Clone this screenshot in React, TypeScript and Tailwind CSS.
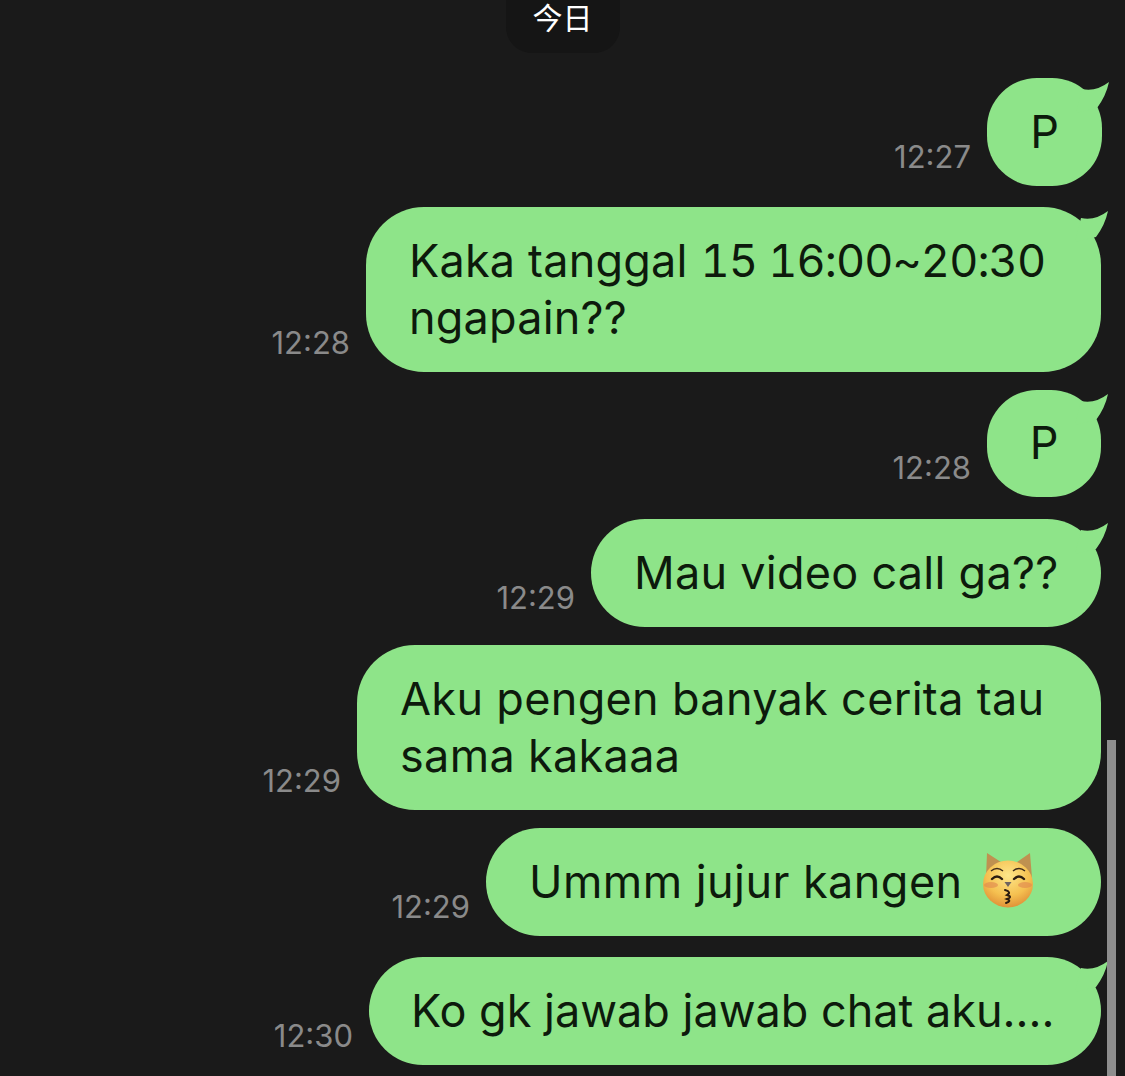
import React from "react";

const font = { fontFamily: "Inter, 'Noto Sans CJK SC', sans-serif" };

function Tail() {
  return (
    <svg className="absolute right-[-8px] top-[3px]" width="46" height="36" viewBox="0 0 46 36">
      <path d="M18 8 Q32 11 45 1 Q42 15 33 27 L12 32 Z" fill="#8ee489" />
    </svg>
  );
}

function Cat() {
  return (
    <svg className="absolute left-[494px] top-[22px]" width="58" height="60" viewBox="0 0 58 60">
      <defs>
        <radialGradient id="f" cx="50%" cy="32%" r="72%">
          <stop offset="0%" stopColor="#fde68a" />
          <stop offset="60%" stopColor="#f5c050" />
          <stop offset="100%" stopColor="#dd8a34" />
        </radialGradient>
      </defs>
      <path d="M7 3 L24 14 L34 14 L50 3 L52 28 L6 28 Z" fill="#bf9150" />
      <ellipse cx="28" cy="34" rx="25" ry="23.5" fill="url(#f)" />
      <path d="M11 21 Q17 16 23 21 M33 21 Q39 16 45 21" stroke="#3d2a1a" strokeWidth="1.5" fill="none" />
      <path d="M12 29 Q17 24 22 29 M34 29 Q39 24 44 29" stroke="#2b1c10" strokeWidth="2.4" fill="none" strokeLinecap="round" />
      <ellipse cx="11" cy="35" rx="7" ry="3" fill="#e08a50" opacity="0.65" />
      <ellipse cx="45" cy="35" rx="7" ry="3" fill="#e08a50" opacity="0.65" />
      <path d="M24.5 32 H31.5 L28 37 Z" fill="#6e6460" />
      <path d="M25 40 Q32 42 27 45 Q33 47 27 49 Q32 51 26 53" stroke="#2b1c10" strokeWidth="2" fill="none" strokeLinecap="round" />
    </svg>
  );
}

export default function App() {
  return (
    <div className="relative h-[1076px] w-[1125px] overflow-hidden bg-[#1a1a1a] text-[#0d1a0c]" style={font}>
      <div className="mx-auto flex h-[53px] w-[114px] items-start justify-center rounded-b-[26px] bg-[#151515] text-[30px] leading-[36px] text-white">
        今日
      </div>

      <div className="mt-[25px] flex items-end justify-end pr-[23px]">
        <span className="mr-[16px] mb-[11px] text-[31px] leading-[36px] text-[#8a8a8a]">12:27</span>
        <div className="relative flex h-[108px] w-[115px] items-center justify-center rounded-[50px] bg-[#8ee489] pb-[2px] text-[45px] leading-[57px]">
          P
          <Tail />
        </div>
      </div>

      <div className="mt-[21px] flex items-end justify-end pr-[24px]">
        <span className="mr-[16px] mb-[11px] text-[31px] leading-[36px] text-[#8a8a8a]">12:28</span>
        <div className="relative h-[165px] w-[735px] rounded-[58px] bg-[#8ee489] pl-[43px] pt-[25px] text-[45px] leading-[57px] tracking-[0.2px]">
          Kaka tanggal <span className="tabular-nums tracking-[-0.9px]">15 16:00~20:30</span>
          <br />
          ngapain??
          <Tail />
        </div>
      </div>

      <div className="mt-[18px] flex items-end justify-end pr-[24px]">
        <span className="mr-[16px] mb-[11px] text-[31px] leading-[36px] text-[#8a8a8a]">12:28</span>
        <div className="relative flex h-[107px] w-[114px] items-center justify-center rounded-[50px] bg-[#8ee489] pb-[2px] text-[45px] leading-[57px]">
          P
          <Tail />
        </div>
      </div>

      <div className="mt-[22px] flex items-end justify-end pr-[24px]">
        <span className="mr-[16px] mb-[11px] text-[31px] leading-[36px] text-[#8a8a8a]">12:29</span>
        <div className="relative h-[108px] w-[510px] rounded-[54px] bg-[#8ee489] pl-[43px] pt-[25px] text-[45px] leading-[57px] tracking-[0.26px]">
          Mau video call ga??
          <Tail />
        </div>
      </div>

      <div className="mt-[18px] flex items-end justify-end pr-[24px]">
        <span className="mr-[16px] mb-[11px] text-[31px] leading-[36px] text-[#8a8a8a]">12:29</span>
        <div className="relative h-[165px] w-[744px] rounded-[58px] bg-[#8ee489] pl-[43px] pt-[25px] text-[45px] leading-[57px] tracking-[0.32px]">
          Aku pengen banyak cerita tau
          <br />
          sama kakaaa
        </div>
      </div>

      <div className="mt-[18px] flex items-end justify-end pr-[24px]">
        <span className="mr-[16px] mb-[11px] text-[31px] leading-[36px] text-[#8a8a8a]">12:29</span>
        <div className="relative h-[108px] w-[615px] rounded-[54px] bg-[#8ee489] pl-[43px] pt-[25px] text-[45px] leading-[57px] tracking-[0.45px]">
          Ummm jujur kangen
          <Cat />
        </div>
      </div>

      <div className="mt-[21px] flex items-end justify-end pr-[24px]">
        <span className="mr-[16px] mb-[11px] text-[31px] leading-[36px] text-[#8a8a8a]">12:30</span>
        <div className="relative h-[108px] w-[732px] rounded-[54px] bg-[#8ee489] pl-[42px] pt-[25px] text-[45px] leading-[57px]">
          Ko gk jawab jawab chat aku....
          <Tail />
        </div>
      </div>

      <div className="absolute right-[9px] top-[740px] h-[336px] w-[9px] bg-[#8e8e8e]" />
    </div>
  );
}
